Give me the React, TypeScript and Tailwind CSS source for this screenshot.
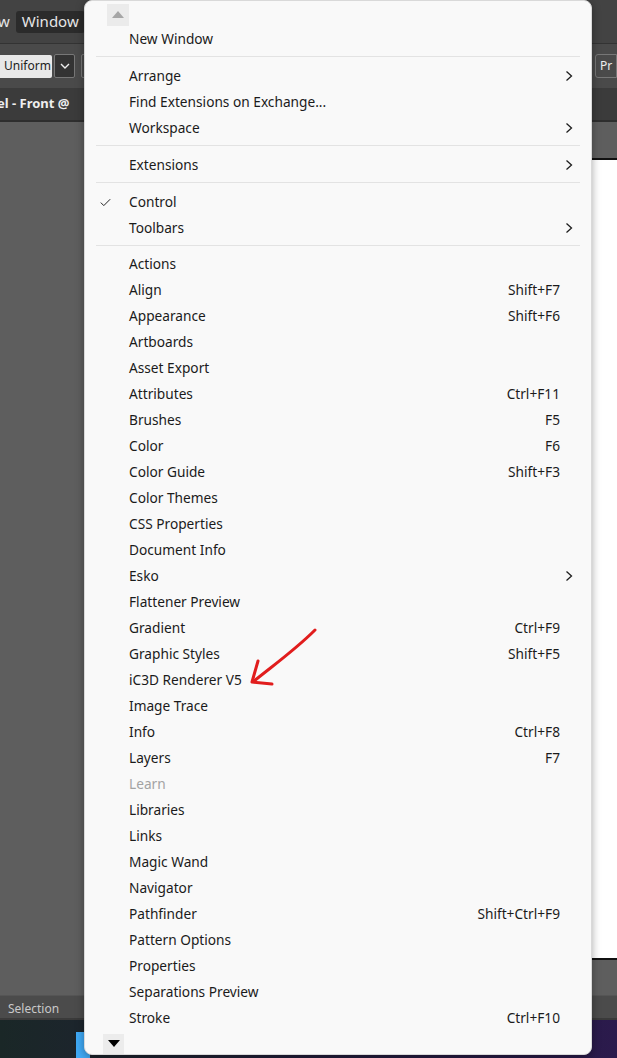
import React from "react";

type Item =
  | { kind: "sep" }
  | { kind: "item"; label: string; shortcut?: string; sub?: boolean; checked?: boolean; disabled?: boolean };

const sep: Item = { kind: "sep" };
const it = (label: string, extra: Partial<Omit<Extract<Item, { kind: "item" }>, "kind" | "label">> = {}): Item => ({
  kind: "item",
  label,
  ...extra,
});

const items: Item[] = [
  it("New Window"),
  sep,
  it("Arrange", { sub: true }),
  it("Find Extensions on Exchange..."),
  it("Workspace", { sub: true }),
  sep,
  it("Extensions", { sub: true }),
  sep,
  it("Control", { checked: true }),
  it("Toolbars", { sub: true }),
  sep,
  it("Actions"),
  it("Align", { shortcut: "Shift+F7" }),
  it("Appearance", { shortcut: "Shift+F6" }),
  it("Artboards"),
  it("Asset Export"),
  it("Attributes", { shortcut: "Ctrl+F11" }),
  it("Brushes", { shortcut: "F5" }),
  it("Color", { shortcut: "F6" }),
  it("Color Guide", { shortcut: "Shift+F3" }),
  it("Color Themes"),
  it("CSS Properties"),
  it("Document Info"),
  it("Esko", { sub: true }),
  it("Flattener Preview"),
  it("Gradient", { shortcut: "Ctrl+F9" }),
  it("Graphic Styles", { shortcut: "Shift+F5" }),
  it("iC3D Renderer V5"),
  it("Image Trace"),
  it("Info", { shortcut: "Ctrl+F8" }),
  it("Layers", { shortcut: "F7" }),
  it("Learn", { disabled: true }),
  it("Libraries"),
  it("Links"),
  it("Magic Wand"),
  it("Navigator"),
  it("Pathfinder", { shortcut: "Shift+Ctrl+F9" }),
  it("Pattern Options"),
  it("Properties"),
  it("Separations Preview"),
  it("Stroke", { shortcut: "Ctrl+F10" }),
];

const Chevron = () => (
  <svg width="8" height="12" viewBox="0 0 8 12" fill="none">
    <path d="M1.5 1.5 L6.5 6 L1.5 10.5" stroke="#1f1f1f" strokeWidth="1.3" />
  </svg>
);

const Check = () => (
  <svg width="11" height="9" viewBox="0 0 11 9" fill="none">
    <path d="M0.8 4.6 L3.8 7.6 L10.2 1.2" stroke="#222" strokeWidth="1" />
  </svg>
);

const MenuRow = ({ item }: { item: Item }) => {
  if (item.kind === "sep") {
    return <div className="mx-[11px] mb-[6px] mt-[4px] h-px bg-[#e3e3e3]" />;
  }
  return (
    <div className="relative flex h-[26px] items-center pl-[44px] pr-[18px]">
      {item.checked && (
        <span className="absolute left-[15px] top-[9px]">
          <Check />
        </span>
      )}
      <span className={item.disabled ? "flex-1 text-[#a3a3a3]" : "flex-1 text-[#1b1b1b]"}>{item.label}</span>
      {item.shortcut && <span className="pr-[13px] text-[#1b1b1b]">{item.shortcut}</span>}
      {item.sub && <Chevron />}
    </div>
  );
};

export default function App() {
  return (
    <div
      className="relative h-[1058px] w-[617px] overflow-hidden bg-[#5e5e5e]"
      style={{ fontFamily: '"Noto Sans", "Liberation Sans", sans-serif' }}
    >
      {/* background: illustrator window */}
      <div className="flex h-full flex-col">
        <div className="flex h-[43px] items-center gap-[6px] bg-[#434343] text-[15px] text-[#e6e6e6]">
          <span className="-ml-[2px]">w</span>
          <span className="flex h-[22px] items-center rounded-[3px] bg-[#2b2b2b] px-[6px]">Window</span>
        </div>
        <div className="flex h-[45px] items-center border-t border-[#333] bg-[#4a4a4a]">
          <span className="flex h-[23px] w-[52px] items-center rounded-r-[2px] bg-[#e8e8e8] pl-[4px] text-[12px] text-[#222]">
            Uniform
          </span>
          <span className="ml-[2px] flex h-[24px] w-[21px] items-center justify-center rounded-[2px] border border-[#777] bg-[#333]">
            <svg width="10" height="6" viewBox="0 0 10 6" fill="none">
              <path d="M1 1 L5 5 L9 1" stroke="#eee" strokeWidth="1.4" />
            </svg>
          </span>
          <span className="ml-[6px] h-[24px] w-[6px] rounded-l-[2px] border border-[#777]" />
          <span className="ml-auto flex h-[24px] w-[22px] items-center rounded-l-[3px] border border-[#777] pl-[4px] text-[12px] text-[#eee]">
            Pr
          </span>
        </div>
        <div className="flex h-[34px] items-center border-b-2 border-[#2e2e2e] bg-[#3b3b3b] text-[13px] font-bold text-[#eeeeee]">
          <span className="-ml-[3px]">el - Front @</span>
        </div>
        <div className="flex flex-1 flex-col items-end pt-[36px]">
          <div className="h-[802px] w-[30px] border-y-2 border-[#111] bg-white" />
        </div>
        <div className="flex h-[23px] items-center border-t border-[#555] bg-[#4b4b4b] pl-[8px] pt-[3px] text-[12px] text-[#c9c9c9]">
          Selection
        </div>
        <div className="h-[40px] border-t-2 border-[#3a3a3a] bg-gradient-to-r from-[#1a2727] via-[#221d3a] to-[#2b1a4c]">
          <div className="ml-[76px] mt-[12px] h-[28px] w-[14px] bg-[#3fa9f5]" />
        </div>
      </div>

      {/* window menu dropdown */}
      <div className="absolute left-[84px] top-0 flex h-[1055px] w-[508px] flex-col rounded-lg border border-[#d9d9d9] bg-[#f9f9f9] pt-[3px] text-[13.7px] shadow-[0_2px_8px_rgba(0,0,0,0.35)]">
        <div className="ml-[22px] flex h-[22px] w-[22px] items-center justify-center bg-[#ebebeb]">
          <svg width="12" height="7" viewBox="0 0 12 7">
            <path d="M0 7 L6 0 L12 7 Z" fill="#a6a6a6" />
          </svg>
        </div>
        {items.map((item, i) => (
          <MenuRow key={i} item={item} />
        ))}
        <div className="ml-[18px] mt-[3px] flex h-[20px] w-[21px] items-center justify-center bg-[#ececec]">
          <svg width="12" height="7" viewBox="0 0 12 7">
            <path d="M0 0 L12 0 L6 7 Z" fill="#000" />
          </svg>
        </div>
      </div>

      {/* red annotation arrow */}
      <svg className="pointer-events-none absolute left-0 top-0" width="617" height="1058">
        <path d="M315 630 C 295 650, 275 664, 254 681" stroke="#e11d1d" strokeWidth="3" fill="none" strokeLinecap="round" />
        <path d="M258 661 L252 682 L272 684" stroke="#e11d1d" strokeWidth="3" fill="none" strokeLinecap="round" strokeLinejoin="round" />
      </svg>
    </div>
  );
}
